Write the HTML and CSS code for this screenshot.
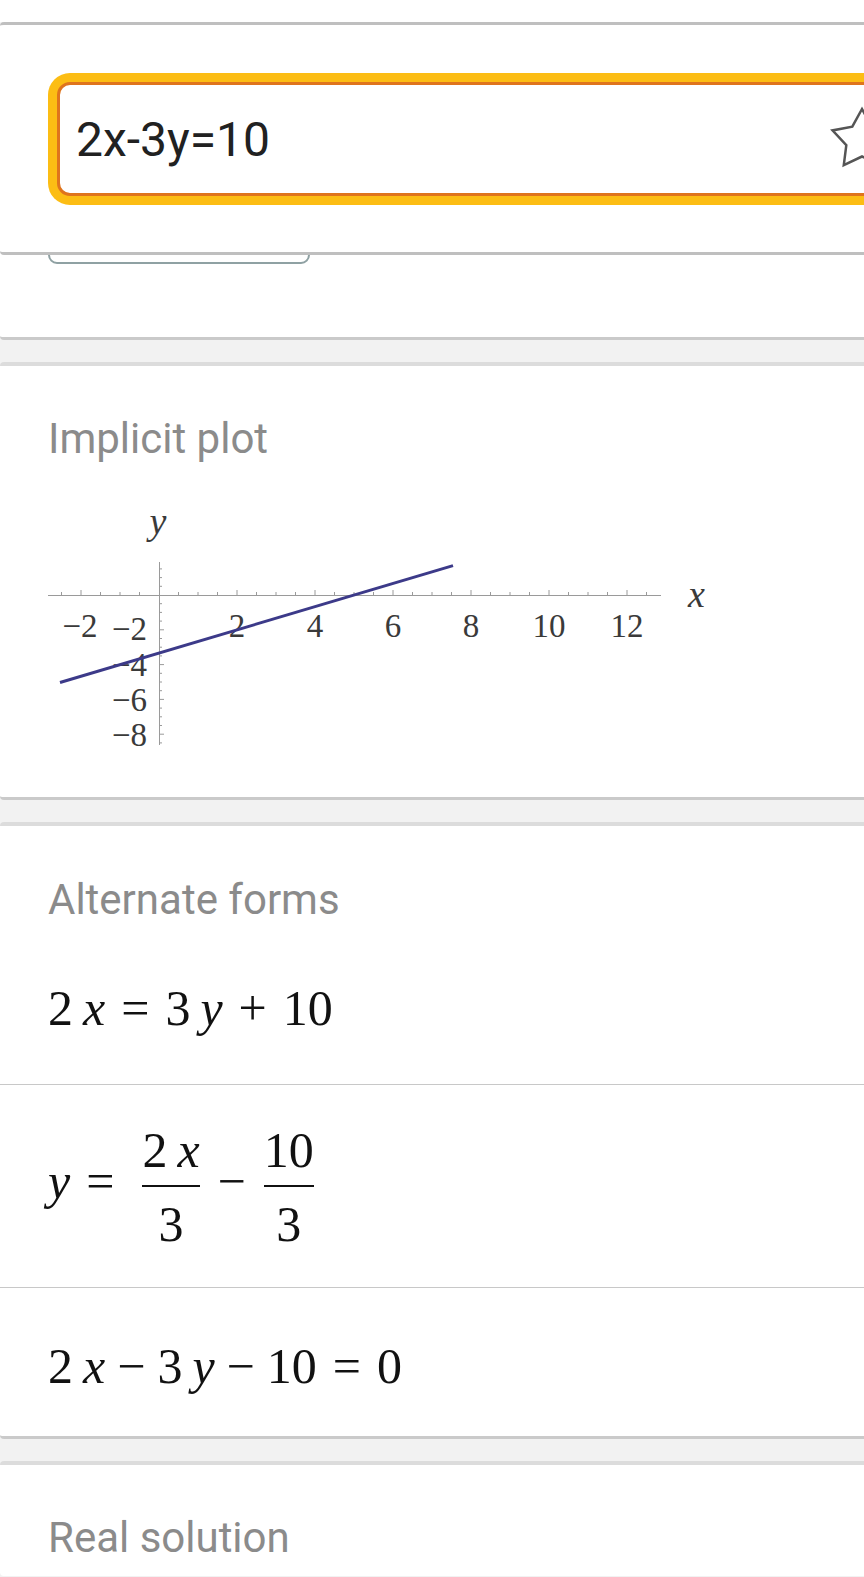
FILE: index.html
```html
<!DOCTYPE html>
<html lang="en">
<head>
<meta charset="UTF-8">
<meta name="viewport" content="width=device-width, initial-scale=1.0">
<title>2x-3y=10</title>
<link rel="stylesheet" href="styles.css">
</head>
<body>

<div class="page">
    <div class="topbar"></div>

    <div class="header card">
        <div class="search-ring">
            <div class="search-input">
                <span class="query">2x-3y=10</span>
                <svg class="star" width="66" height="66" viewBox="0 0 66 66">
                    <path d="M33 3 L42.7 20.65 L62.48 24.42 L48.69 39.1 L51.22 59.08 L33 50.5 L14.78 59.08 L17.31 39.1 L3.52 24.42 L23.3 20.65 Z" fill="none" stroke="#555" stroke-width="2.5"/>
                </svg>
            </div>
        </div>
    </div>

    <div class="card input-card">
        <div class="btn"></div>
    </div>

    <div class="card pod">
        <div class="pod-title">Implicit plot</div>
        <svg class="plot" width="680" height="270" viewBox="0 0 680 270">
            <g stroke="#9a9a9a" stroke-width="1" fill="none">
                <path d="M0 105.5H613"/>
                <path d="M111.5 72V255"/>
                <!-- x ticks -->
                <path d="M13.5 105v-3M52.5 105v-3M72 105v-3M91.5 105v-3M130.5 105v-3M150 105v-3M169.5 105v-3M208.5 105v-3M228 105v-3M247.5 105v-3M286.5 105v-3M306 105v-3M325.5 105v-3M364.5 105v-3M384 105v-3M403.5 105v-3M442.5 105v-3M462 105v-3M481.5 105v-3M520.5 105v-3M540 105v-3M559.5 105v-3M598.5 105v-3"/>
                <path d="M33 105v-5M189 105v-5M267 105v-5M345 105v-5M423 105v-5M501 105v-5M579 105v-5"/>
                <!-- y ticks -->
                <path d="M111 78.9h3M111 87.6h3M111 96.3h3M111 113.7h3M111 122.4h3M111 131.1h3M111 148.5h3M111 157.2h3M111 165.9h3M111 183.3h3M111 192h3M111 200.7h3M111 218.1h3M111 226.8h3M111 235.5h3M111 252.9h3"/>
                <path d="M111 139.8h5M111 174.6h5M111 209.4h5M111 244.2h5"/>
            </g>
            <g class="tick-label" text-anchor="middle">
                <text x="32" y="147">&#8722;2</text>
                <text x="189" y="147">2</text>
                <text x="267" y="147">4</text>
                <text x="345" y="147">6</text>
                <text x="423" y="147">8</text>
                <text x="501" y="147">10</text>
                <text x="579" y="147">12</text>
            </g>
            <g class="tick-label" text-anchor="end">
                <text x="99" y="150">&#8722;2</text>
                <text x="99" y="186">&#8722;4</text>
                <text x="99" y="221">&#8722;6</text>
                <text x="99" y="256">&#8722;8</text>
            </g>
            <text class="axis-label" x="110" y="44" text-anchor="middle">y</text>
            <text class="axis-label" x="640" y="117">x</text>
            <path d="M12 192.5L405 75.6" stroke="#3c3a89" stroke-width="3" fill="none"/>
        </svg>
    </div>

    <div class="card pod forms">
        <div class="pod-title">Alternate forms</div>
        <div class="form first">2<span class="var">x</span><span class="op">=</span>3<span class="var">y</span><span class="op">+</span>10</div>
        <div class="form frac-row"><span class="var first-var">y</span><span class="op">=</span><span class="frac lead"><span class="num">2<span class="var">x</span></span><span class="bar"></span><span class="den">3</span></span><span class="op minus">&#8722;</span><span class="frac"><span class="num">10</span><span class="bar"></span><span class="den">3</span></span></div>
        <div class="form last">2<span class="var">x</span><span class="op minus">&#8722;</span>3<span class="var">y</span><span class="op minus">&#8722;</span>10<span class="op">=</span>0</div>
    </div>

    <div class="card pod solution">
        <div class="pod-title">Real solution</div>
    </div>
</div>

</body>
</html>
```

FILE: styles.css
```css
html, body {
    margin: 0;
    padding: 0;
    overflow-x: hidden;
}

body {
    background-color: #f2f2f2;
    font-family: Roboto, "Liberation Sans", sans-serif;
}

.page {
    overflow: hidden;
}

.topbar {
    height: 22px;
    background-color: #fff;
}

/* cards run past the right edge of the screen */
.card {
    background-color: #fff;
    margin-right: -8px;
    border-radius: 4px;
    border-top: 4px solid #dcdcdc;
    border-bottom: 3px solid #cacaca;
}

.card + .card {
    margin-top: 22px;
}

.header {
    position: relative;
    z-index: 2;
    border-top: 3px solid #bfbfbf;
    border-bottom: 3px solid #bfbfbf;
    padding: 48px 0 47px 48px;
}

.search-ring {
    width: 844px;
    padding: 9px;
    background-color: #fcbd14;
    border-radius: 22px;
}

.search-input {
    height: 108px;
    border: 3px solid #df741d;
    border-radius: 13px;
    background-color: #fff;
    display: flex;
    align-items: center;
    padding: 0 3px 0 16px;
}

.query {
    font-size: 48px;
    color: #212121;
}

.star {
    display: block;
    margin-left: auto;
}

/* card under the header, only the bottom of its button shows */
.header + .input-card {
    margin-top: -60px;
    border-top: none;
    padding: 21px 0 73px 48px;
}

.btn {
    width: 258px;
    height: 44px;
    border: 2px solid #8fa1a3;
    border-radius: 9px;
}

.pod {
    padding-top: 48px;
}

.pod-title {
    font-size: 42px;
    line-height: 49px;
    color: #8b8b8b;
    margin: 0 48px;
}

.plot {
    display: block;
    margin: 27px 0 37px 48px;
}

.tick-label {
    font-family: "Liberation Serif", serif;
    font-size: 33px;
    fill: #3a3a3a;
}

.axis-label {
    font-family: "Liberation Serif", serif;
    font-style: italic;
    font-size: 38px;
    fill: #3a3a3a;
}

.forms {
    padding-top: 49px;
}

.form {
    font-family: "Liberation Serif", serif;
    font-size: 50px;
    line-height: 48px;
    color: #111;
    padding: 52px 48px;
    border-bottom: 1px solid #c8c8c8;
    white-space: nowrap;
}

.form.first {
    margin-top: 8px;
}

.form.frac-row {
    padding: 45px 48px 43px;
}

.form.last {
    padding: 54px 48px 46px;
    border-bottom: none;
}

.var {
    font-style: italic;
    margin-left: 10px;
}

.var.first-var {
    margin-left: 0;
}

.op {
    margin: 0 16px;
}

.op.minus {
    margin: 0 12px;
}

.frac {
    display: inline-flex;
    flex-direction: column;
    vertical-align: middle;
    text-align: center;
    padding: 0 2px;
    margin: 0 4px;
}

.frac.lead {
    margin-left: 10px;
}

.num, .den {
    line-height: 40px;
}

.bar {
    height: 2px;
    background-color: #111;
    margin: 15px 0 17px;
}

/* last card is cut off by the bottom of the screen */
.solution {
    border-bottom: none;
    padding-bottom: 14px;
}
```
